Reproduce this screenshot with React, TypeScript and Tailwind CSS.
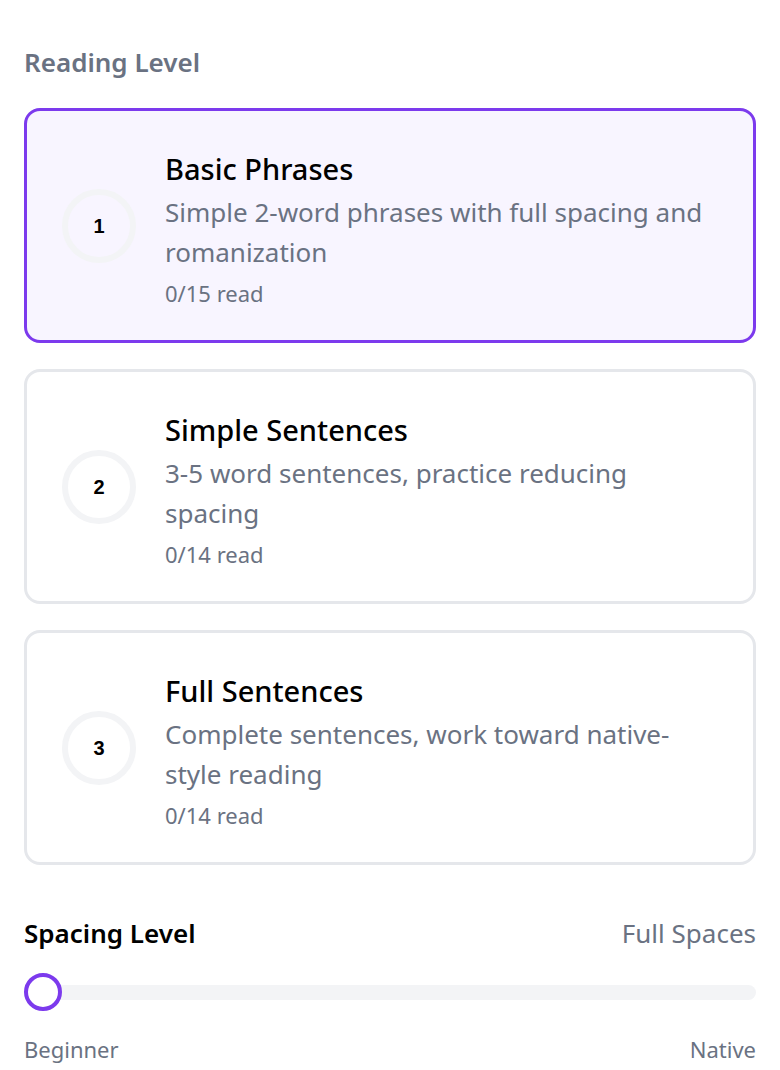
import { useState } from "react";

const levels = [
  { n: 1, title: "Basic Phrases", desc: "Simple 2-word phrases with full spacing and romanization", read: "0/15 read" },
  { n: 2, title: "Simple Sentences", desc: "3-5 word sentences, practice reducing spacing", read: "0/14 read" },
  { n: 3, title: "Full Sentences", desc: "Complete sentences, work toward native-style reading", read: "0/14 read" },
];

export default function App() {
  const [active, setActive] = useState(1);
  const [spacing, setSpacing] = useState(0);

  return (
    <div className="min-h-screen bg-white px-6 pt-[44px] pb-4 font-['Noto_Sans',sans-serif]">
      <h2 className="text-[26px] leading-[36px] font-semibold text-gray-500">Reading Level</h2>

      <div className="mt-[28px] flex flex-col gap-[26px]">
        {levels.map((l) => {
          const on = l.n === active;
          return (
            <button
              key={l.n}
              type="button"
              onClick={() => setActive(l.n)}
              className={
                "flex items-center gap-[29px] rounded-[16px] border-[3px] pl-[35px] pr-[38px] h-[235px] text-left " +
                (on ? "border-[#7c3aed] bg-[#f8f5ff]" : "border-gray-200 bg-white")
              }
            >
              <div className="flex h-[74px] w-[74px] shrink-0 items-center justify-center rounded-full border-[6px] border-gray-100">
                <span className="font-['Liberation_Sans',sans-serif] text-[20px] font-bold text-black">{l.n}</span>
              </div>
              <div className="flex flex-col gap-[3px] pt-[8px]">
                <div className="text-[29px] leading-[40px] font-medium text-black">{l.title}</div>
                <div className="text-[26px] leading-[40px] text-gray-500">{l.desc}</div>
                <div className="text-[22px] leading-[36px] text-gray-500">{l.read}</div>
              </div>
            </button>
          );
        })}
      </div>

      <div className="mt-[50px] flex items-center justify-between">
        <span className="text-[26px] leading-[36px] font-semibold text-black">Spacing Level</span>
        <span className="text-[26px] leading-[36px] text-gray-500">Full Spaces</span>
      </div>

      <div className="relative mt-[22px] h-[38px] flex items-center">
        <div className="h-[15px] w-full rounded-full bg-gray-100" />
        <div
          className="absolute top-0 h-[38px] w-[38px] rounded-full border-[4px] border-[#7c3aed] bg-white"
          style={{ left: `calc(${spacing}% - ${spacing * 0.38}px)` }}
          onClick={() => setSpacing(spacing === 0 ? 50 : 0)}
        />
      </div>

      <div className="mt-[23px] flex items-center justify-between text-[22px] leading-[30px] text-gray-500">
        <span>Beginner</span>
        <span>Native</span>
      </div>
    </div>
  );
}
